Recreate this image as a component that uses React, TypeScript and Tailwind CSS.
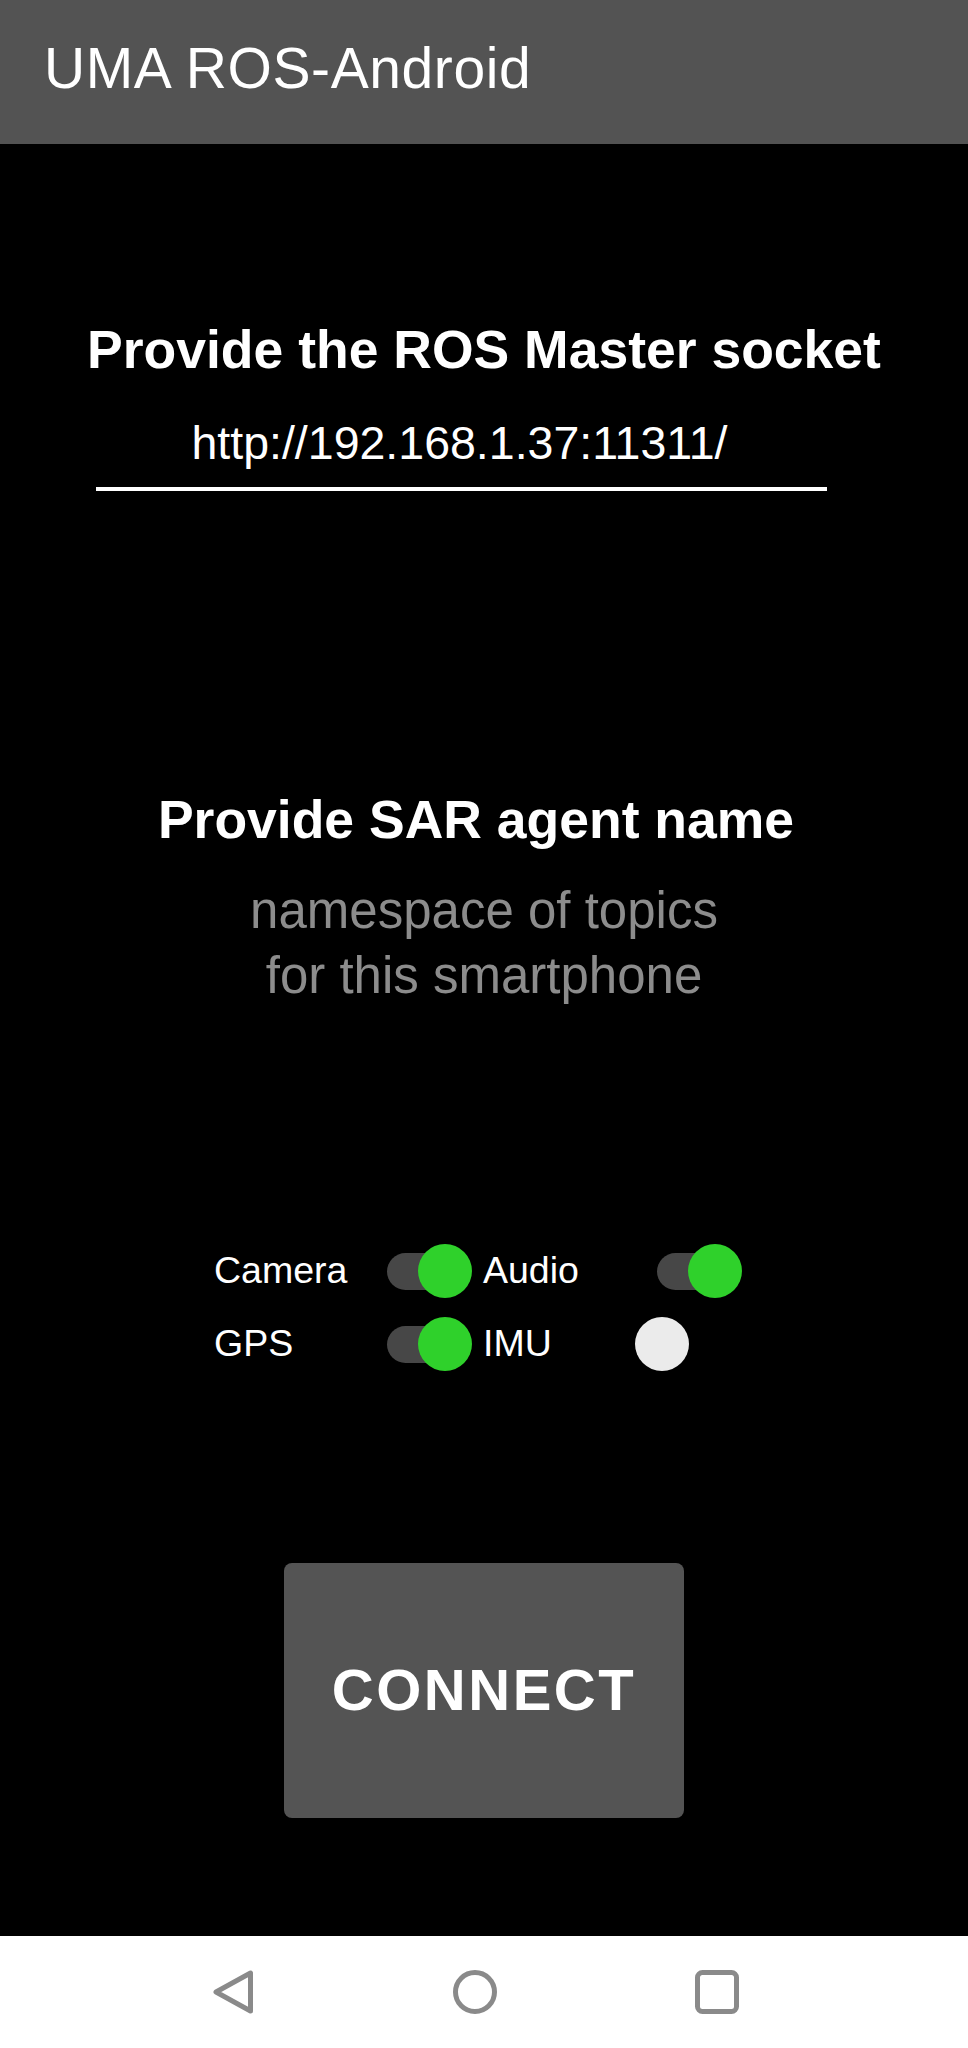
import React from "react";

type SwitchProps = {
  on: boolean;
};

function Toggle({ on }: SwitchProps) {
  return (
    <div className="relative w-[107px] h-[54px] shrink-0">
      {on && (
        <div className="absolute left-[22px] top-[9px] w-[63px] h-[37px] rounded-full bg-[#474747]" />
      )}
      <div
        className={
          on
            ? "absolute top-0 left-[53px] w-[54px] h-[54px] rounded-full bg-[#2fd12b]"
            : "absolute top-0 left-0 w-[54px] h-[54px] rounded-full bg-[#ebebeb]"
        }
      />
    </div>
  );
}

const sensors = [
  [
    { label: "Camera", on: true },
    { label: "Audio", on: true },
  ],
  [
    { label: "GPS", on: true },
    { label: "IMU", on: false },
  ],
];

export default function App() {
  return (
    <div className="w-[968px] h-[2048px] flex flex-col bg-black font-['Liberation_Sans',Arial,sans-serif] text-white">
      {/* action bar */}
      <header className="h-[144px] shrink-0 bg-[#535353] pl-[44px] pt-[40px]">
        <h1 className="text-[57px] leading-none tracking-[0.6px]">UMA ROS-Android</h1>
      </header>

      <main className="h-[1792px] shrink-0 flex flex-col items-center">
        <h2 className="mt-[179px] text-[53.5px] leading-none font-bold">
          Provide the ROS Master socket
        </h2>

        <div className="self-start ml-[96px] w-[731px] mt-[43px] flex flex-col">
          <p className="text-[46.5px] leading-none text-center pr-[4px]">
            http://192.168.1.37:11311/
          </p>
          <div className="mt-[21px] h-[4px] bg-white" />
        </div>

        <h2 className="mt-[302px] pr-[16px] text-[53.5px] leading-none font-bold">
          Provide SAR agent name
        </h2>
        <p className="mt-[31px] text-[51px] leading-[65px] text-center text-[#8c8c8c]">
          namespace of topics
          <br />
          for this smartphone
        </p>

        <div className="self-start mt-[236px] ml-[214px] flex flex-col gap-[19px]">
          {sensors.map((row, i) => (
            <div key={i} className="flex items-center h-[54px]">
              <span className="w-[151px] text-[37.5px] leading-none">{row[0].label}</span>
              <Toggle on={row[0].on} />
              <span className="ml-[11px] w-[152px] text-[37.5px] leading-none">{row[1].label}</span>
              <Toggle on={row[1].on} />
            </div>
          ))}
        </div>

        <button className="mt-[192px] w-[400px] h-[255px] rounded-[8px] bg-[#545454] flex items-center justify-center text-[58px] leading-none font-bold tracking-[2.5px] text-white">
          CONNECT
        </button>
      </main>

      {/* system navigation */}
      <nav className="h-[112px] shrink-0 bg-white flex items-center">
        <svg className="ml-[213px]" width="40" height="44" viewBox="0 0 40 44" fill="none">
          <path d="M37.5 3 L37.5 41 L3 22 Z" stroke="#8a8a8a" strokeWidth="5" strokeLinejoin="round" />
        </svg>
        <svg className="ml-[200px]" width="44" height="44" viewBox="0 0 44 44" fill="none">
          <circle cx="22" cy="22" r="19.5" stroke="#8a8a8a" strokeWidth="5" />
        </svg>
        <svg className="ml-[198px]" width="44" height="44" viewBox="0 0 44 44" fill="none">
          <rect x="2.5" y="2.5" width="39" height="39" rx="5" stroke="#8a8a8a" strokeWidth="5" />
        </svg>
      </nav>
    </div>
  );
}
